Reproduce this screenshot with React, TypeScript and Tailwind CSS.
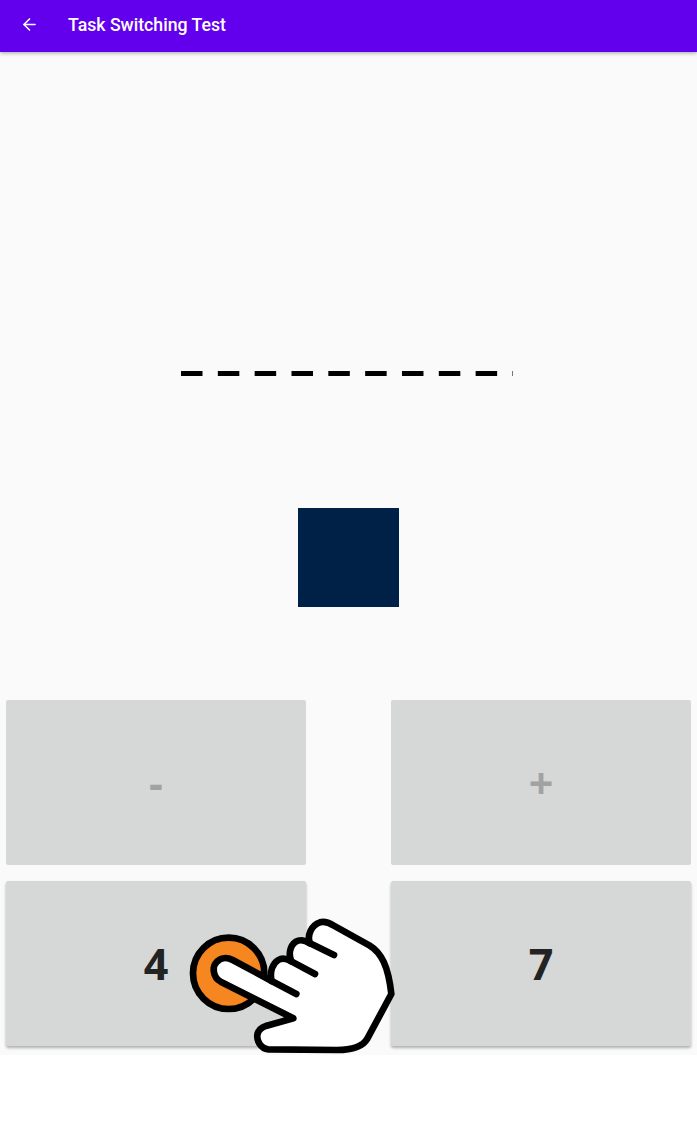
import { ArrowLeft } from 'lucide-react';

const buttons = [
  { label: '-', enabled: false },
  { label: '+', enabled: false },
  { label: '4', enabled: true },
  { label: '7', enabled: true },
];

function Hand() {
  return (
    <svg
      className="absolute left-[130px] top-[900px]"
      width="280"
      height="170"
      viewBox="0 0 840 510"
      fill="none"
      stroke="#000"
      strokeWidth="20"
      strokeLinecap="round"
      strokeLinejoin="round"
    >
      <circle cx="296" cy="220" r="107" fill="#f68620" />
      <path
        fill="#fff"
        d="M490 355 L272 245 C248 232 246 200 260 186 C272 172 292 172 308 180 L425 243 C418 215 428 190 445 180 C458 172 470 176 484 184 C472 155 485 128 505 122 C518 118 530 124 540 130 C530 105 545 75 570 67 C585 63 597 68 610 76 L718 136 C755 158 775 200 784 282 L712 416 C700 438 670 450 620 450 L415 448 C390 446 380 420 382 405 C384 390 394 382 410 377 Z"
      />
      <path d="M425 243 L499 282 M484 184 L555 222 M540 130 L612 165" />
    </svg>
  );
}

export default function App() {
  return (
    <div className="relative flex h-[1133px] flex-col overflow-hidden bg-white font-['Roboto',sans-serif] antialiased">
      <header className="z-10 flex h-[52px] items-center bg-[#6200ee] pb-[3px] pl-[20px] text-white shadow-[0_1px_4px_rgba(0,0,0,0.35)]">
        <ArrowLeft size={19} strokeWidth={2} />
        <h1 className="ml-[29px] mt-[2px] text-[17.7px] font-medium">Task Switching Test</h1>
      </header>

      <main className="flex h-[1003px] flex-col items-center bg-[#fafafa]">
        <svg className="mt-[319px] ml-[181px] shrink-0 self-start" width="332.3" height="5">
          <line x1="0" y1="2.5" x2="333" y2="2.5" stroke="#000" strokeWidth="5" strokeDasharray="21.5 15.33" />
        </svg>

        <div className="mt-[131.5px] h-[99.5px] w-[101px] shrink-0 bg-[#002147]" />

        <div className="mt-[93px] grid w-full grid-cols-[300px_300px] justify-between gap-y-[16px] px-[6px]">
          {buttons.map((b) => (
            <button
              key={b.label}
              className={`flex h-[165px] items-center justify-center rounded-[2px] bg-[#d6d7d7] pt-[2px] font-['Open_Sans',sans-serif] text-[43px] font-bold ${
                b.enabled
                  ? 'text-[#212121] shadow-[0_2px_3px_rgba(0,0,0,0.3)]'
                  : 'text-[#a1a2a2]'
              }`}
            >
              <span className="opacity-99">{b.label}</span>
            </button>
          ))}
        </div>
      </main>

      <Hand />
    </div>
  );
}
